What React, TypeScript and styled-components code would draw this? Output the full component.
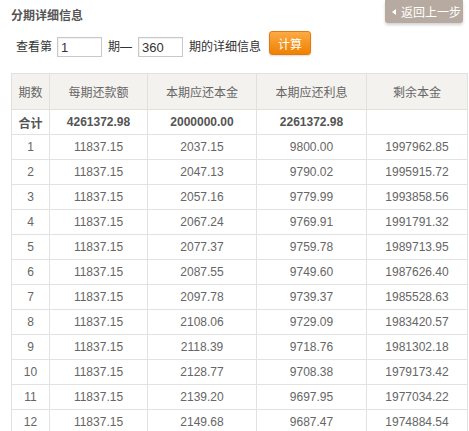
import React from "react";
import styled, { createGlobalStyle } from "styled-components";

const GlobalStyle = createGlobalStyle`
  html, body { margin: 0; padding: 0; background: #fff; }
  body { font-family: "Liberation Sans", "Noto Sans CJK SC", sans-serif; font-size: 12px; color: #555; }
`;

const Page = styled.div`
  width: 469px;
  height: 431px;
  overflow: hidden;
`;

const TopBar = styled.div`
  height: 31px;
  display: flex;
  justify-content: space-between;
  align-items: flex-start;
  padding: 0 6px 0 11px;
`;

const Title = styled.h2`
  margin: 8px 0 0;
  font-size: 12px;
  line-height: 16px;
  font-weight: bold;
  color: #555;
`;

const BackButton = styled.button`
  display: flex;
  align-items: center;
  gap: 3px;
  height: 23px;
  width: 78px;
  padding: 0 0 0 7px;
  border: none;
  border-radius: 0 0 3px 3px;
  background: #b7aaa0;
  color: #fff;
  font-family: inherit;
  font-size: 12px;
  box-shadow: 0 2px 3px rgba(0, 0, 0, 0.18);
`;

const Arrow = styled.span`
  width: 0;
  height: 0;
  border-top: 3px solid transparent;
  border-bottom: 3px solid transparent;
  border-right: 4px solid #fff;
  margin-right: 2px;
`;

const Controls = styled.div`
  display: flex;
  align-items: flex-end;
  padding-left: 16px;
  height: 26px;
  color: #333;
`;

const Label = styled.span<{ $gap?: number }>`
  line-height: 20px;
  margin-right: ${(p) => p.$gap ?? 5}px;
  font-size: 12px;
`;

const Input = styled.input`
  box-sizing: border-box;
  width: 45px;
  height: 20px;
  border: 1px solid #c8c8c8;
  box-shadow: inset 1px 1px 1px rgba(0, 0, 0, 0.06);
  padding: 0 3px;
  font-family: "Liberation Sans", sans-serif;
  font-size: 13px;
  color: #333;
  margin-right: 6px;
  outline: none;
`;

const CalcButton = styled.button`
  box-sizing: border-box;
  width: 42px;
  height: 24px;
  margin: 0 0 2px 8px;
  border: 1px solid #e27a10;
  border-radius: 3px;
  background: linear-gradient(#fbab45, #f08000);
  color: #fff;
  font-family: inherit;
  font-size: 12px;
  padding: 0;
  box-shadow: 0 1px 2px rgba(0, 0, 0, 0.15);
`;

const Table = styled.table`
  margin: 16px 0 0 11px;
  width: 451px;
  border-collapse: collapse;
  table-layout: fixed;
  font-size: 12px;
`;

const HeadCell = styled.th<{ $w: number }>`
  width: ${(p) => p.$w}px;
  height: 35px;
  padding: 0;
  background: #f4f2ef;
  border: 1px solid #e2e0dd;
  color: #666;
  font-weight: normal;
  text-align: center;
`;

const Cell = styled.td<{ $bold?: boolean }>`
  height: 24px;
  padding: 0;
  border: 1px solid #e2e2e2;
  text-align: center;
  color: ${(p) => (p.$bold ? "#555" : "#666")};
  font-weight: ${(p) => (p.$bold ? "bold" : "normal")};
`;

const rows = [
  ["1", "11837.15", "2037.15", "9800.00", "1997962.85"],
  ["2", "11837.15", "2047.13", "9790.02", "1995915.72"],
  ["3", "11837.15", "2057.16", "9779.99", "1993858.56"],
  ["4", "11837.15", "2067.24", "9769.91", "1991791.32"],
  ["5", "11837.15", "2077.37", "9759.78", "1989713.95"],
  ["6", "11837.15", "2087.55", "9749.60", "1987626.40"],
  ["7", "11837.15", "2097.78", "9739.37", "1985528.63"],
  ["8", "11837.15", "2108.06", "9729.09", "1983420.57"],
  ["9", "11837.15", "2118.39", "9718.76", "1981302.18"],
  ["10", "11837.15", "2128.77", "9708.38", "1979173.42"],
  ["11", "11837.15", "2139.20", "9697.95", "1977034.22"],
  ["12", "11837.15", "2149.68", "9687.47", "1974884.54"],
];

const heads: [string, number][] = [
  ["期数", 37],
  ["每期还款额", 97],
  ["本期应还本金", 108],
  ["本期应还利息", 109],
  ["剩余本金", 100],
];

export default function App() {
  return (
    <>
      <GlobalStyle />
      <Page>
        <TopBar>
          <Title>分期详细信息</Title>
          <BackButton>
            <Arrow />
            返回上一步
          </BackButton>
        </TopBar>
        <Controls>
          <Label>查看第</Label>
          <Input defaultValue="1" />
          <Label $gap={6}>期—</Label>
          <Input defaultValue="360" />
          <Label $gap={0}>期的详细信息</Label>
          <CalcButton>计算</CalcButton>
        </Controls>
        <Table>
          <thead>
            <tr>
              {heads.map(([h, w]) => (
                <HeadCell key={h} $w={w}>
                  {h}
                </HeadCell>
              ))}
            </tr>
          </thead>
          <tbody>
            <tr>
              <Cell $bold>合计</Cell>
              <Cell $bold>4261372.98</Cell>
              <Cell $bold>2000000.00</Cell>
              <Cell $bold>2261372.98</Cell>
              <Cell $bold></Cell>
            </tr>
            {rows.map((r) => (
              <tr key={r[0]}>
                {r.map((c, i) => (
                  <Cell key={i}>{c}</Cell>
                ))}
              </tr>
            ))}
          </tbody>
        </Table>
      </Page>
    </>
  );
}
